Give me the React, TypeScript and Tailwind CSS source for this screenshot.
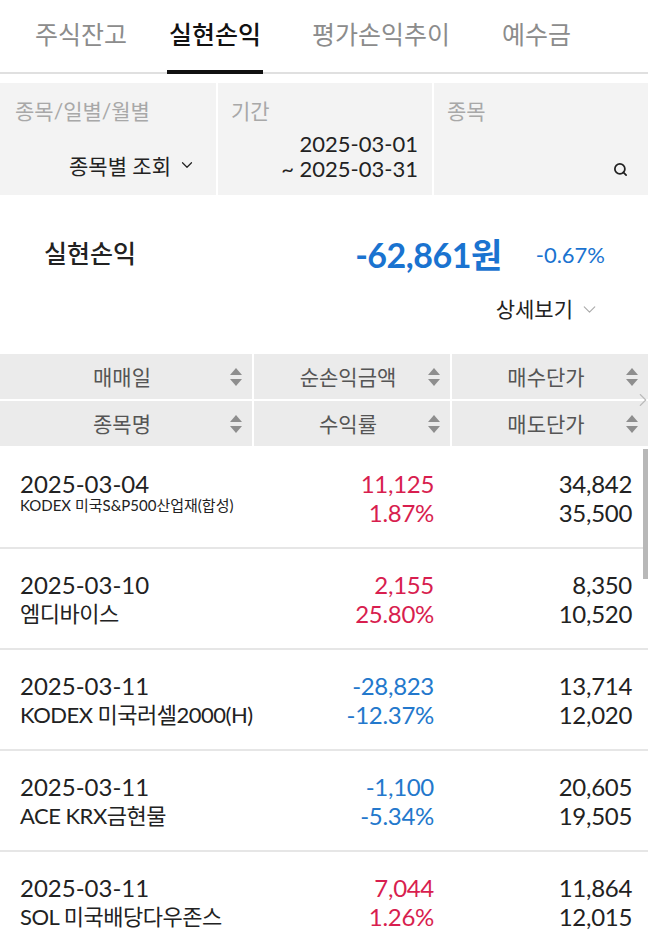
import { ChevronDown, ChevronRight, Search } from "lucide-react";

const rows = [
  { date: "2025-03-04", name: "KODEX 미국S&P500산업재(합성)", small: true, profit: "11,125", rate: "1.87%", buy: "34,842", sell: "35,500", up: true },
  { date: "2025-03-10", name: "엠디바이스", small: false, profit: "2,155", rate: "25.80%", buy: "8,350", sell: "10,520", up: true },
  { date: "2025-03-11", name: "KODEX 미국러셀2000(H)", small: false, profit: "-28,823", rate: "-12.37%", buy: "13,714", sell: "12,020", up: false },
  { date: "2025-03-11", name: "ACE KRX금현물", small: false, profit: "-1,100", rate: "-5.34%", buy: "20,605", sell: "19,505", up: false },
  { date: "2025-03-11", name: "SOL 미국배당다우존스", small: false, profit: "7,044", rate: "1.26%", buy: "11,864", sell: "12,015", up: true },
];

function SortIcon() {
  return (
    <svg width="12" height="20" viewBox="0 0 12 20" className="shrink-0">
      <path d="M6 1 L12 8 L0 8 Z" fill="#8e8e8e" />
      <path d="M0 12 L12 12 L6 19 Z" fill="#8e8e8e" />
    </svg>
  );
}

function HeadCell({ label }: { label: string }) {
  return (
    <div className="flex items-center h-[45px] bg-[#ebebeb] pl-[14px] pr-[10px]">
      <span className="flex-1 text-center text-[21px] text-[#555]">{label}</span>
      <SortIcon />
    </div>
  );
}

export default function App() {
  return (
    <div
      className="relative w-[648px] h-[946px] overflow-hidden bg-white text-[#222]"
      style={{ fontFamily: "Lato, 'Noto Sans CJK KR', sans-serif" }}
    >
      {/* tabs */}
      <nav className="flex h-[74px] border-b-2 border-[#e0e0e0] text-[25px]">
        <div className="flex items-center ml-[35px] pb-[3px] text-[#8c8c8c]">주식잔고</div>
        <div className="relative flex items-center ml-[42px] pb-[3px] font-medium text-[#111]">
          실현손익
          <span className="absolute left-[-2px] right-[-2px] bottom-[-2px] h-[4px] bg-[#111]" />
        </div>
        <div className="flex items-center ml-[51px] pb-[3px] text-[#8c8c8c]">평가손익추이</div>
        <div className="flex items-center ml-[52px] pb-[3px] text-[#8c8c8c]">예수금</div>
      </nav>

      {/* filters */}
      <div className="grid grid-cols-[216px_214px_1fr] gap-[2px] mt-[9px] h-[112px]">
        <div className="flex flex-col justify-between bg-[#f3f3f3] pl-[15px] pr-[20px] pt-[12px] pb-[14px]">
          <span className="text-[21px] text-[#a8a8a8]">종목/일별/월별</span>
          <span className="flex items-center justify-end gap-[7px] text-[21px]">
            종목별 조회
            <ChevronDown size={18} strokeWidth={1.6} />
          </span>
        </div>
        <div className="flex flex-col justify-between bg-[#f3f3f3] pl-[13px] pr-[14px] pt-[12px] pb-[14px]">
          <span className="text-[21px] text-[#a8a8a8]">기간</span>
          <span className="text-right text-[22px] leading-[25px]">
            2025-03-01
            <br />~ 2025-03-31
          </span>
        </div>
        <div className="flex flex-col justify-between bg-[#f3f3f3] pl-[13px] pr-[20px] pt-[12px] pb-[18px]">
          <span className="text-[21px] text-[#a8a8a8]">종목</span>
          <span className="flex justify-end">
            <Search size={15} strokeWidth={2.8} color="#222" />
          </span>
        </div>
      </div>

      {/* summary */}
      <div className="flex items-center h-[40px] mt-[39px] pl-[44px] pr-[43px]">
        <span className="flex-1 text-[25px] font-medium">실현손익</span>
        <span className="text-[34px] font-bold text-[#1a73d0] tracking-[-0.5px]">-62,861원</span>
        <span className="ml-[34px] text-[22px] text-[#1a73d0]">-0.67%</span>
      </div>
      <div className="flex items-center justify-end gap-[6px] h-[26px] mt-[22px] pr-[48px] text-[21px]">
        상세보기
        <ChevronDown size={21} strokeWidth={1.3} color="#aaa" />
      </div>

      {/* table */}
      <div className="relative mt-[32px]">
        <div className="grid grid-cols-[252px_196px_196px] gap-[2px]">
          <HeadCell label="매매일" />
          <HeadCell label="순손익금액" />
          <HeadCell label="매수단가" />
          <HeadCell label="종목명" />
          <HeadCell label="수익률" />
          <HeadCell label="매도단가" />
        </div>
        <ChevronRight
          size={22}
          strokeWidth={1.2}
          color="#bbb"
          className="absolute right-[-6px] top-[35px]"
        />

        <div className="relative mt-[2px]">
          {rows.map((r, i) => (
            <div key={i} className="flex h-[101px] border-b-2 border-[#e6e6e6] pt-[21px] leading-[29px]">
              <div className="w-[252px] pl-[20px] whitespace-nowrap">
                <div className="text-[24px]">{r.date}</div>
                {r.small ? (
                  <div className="text-[15px] leading-[15px]">{r.name}</div>
                ) : (
                  <div className="text-[22px] tracking-[-0.5px]">{r.name}</div>
                )}
              </div>
              <div className={`w-[198px] pr-[16px] text-right text-[24px] tracking-[-0.3px] ${r.up ? "text-[#d81e4f]" : "text-[#2378cc]"}`}>
                <div>{r.profit}</div>
                <div>{r.rate}</div>
              </div>
              <div className="w-[198px] pr-[16px] text-right text-[24px] tracking-[-0.3px]">
                <div>{r.buy}</div>
                <div>{r.sell}</div>
              </div>
            </div>
          ))}
          <div className="absolute right-0 top-[1px] w-[5px] h-[130px] bg-[#b8b8b8]" />
        </div>
      </div>
    </div>
  );
}
